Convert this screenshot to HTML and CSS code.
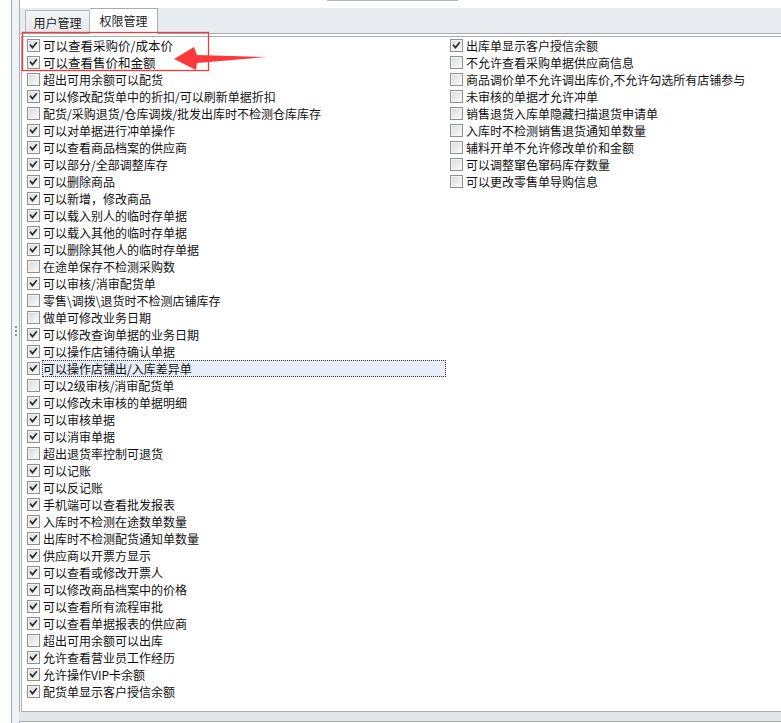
FILE: index.html
```html
<!DOCTYPE html>
<html>
<head>
<meta charset="utf-8">
<link rel="stylesheet" href="styles.css">
</head>
<body>
<div class="page">
  <div class="gutter"></div>
  <div class="splitter"><div class="grip"><i></i><i></i><i></i></div></div>
  <div class="tabctl">
    <div class="topstrip"><div class="topbar"></div></div>
    <div class="tabstrip">
      <div class="tab">用户管理</div>
      <div class="tab active">权限管理</div>
    </div>
    <div class="tabbody">
      <div class="panel">
        <div class="col left">
          <div class="opt big on"><span class="box"><svg viewBox="0 0 13 13"><path d="M3 6.2 L5.3 9 L9.8 3.4"/></svg></span><span class="txt">可以查看采购价/成本价</span></div>
          <div class="opt big on"><span class="box"><svg viewBox="0 0 13 13"><path d="M3 6.2 L5.3 9 L9.8 3.4"/></svg></span><span class="txt">可以查看售价和金额</span></div>
          <div class="opt"><span class="box"></span><span class="txt">超出可用余额可以配货</span></div>
          <div class="opt on"><span class="box"><svg viewBox="0 0 13 13"><path d="M3 6.2 L5.3 9 L9.8 3.4"/></svg></span><span class="txt">可以修改配货单中的折扣/可以刷新单据折扣</span></div>
          <div class="opt"><span class="box"></span><span class="txt">配货/采购退货/仓库调拨/批发出库时不检测仓库库存</span></div>
          <div class="opt on"><span class="box"><svg viewBox="0 0 13 13"><path d="M3 6.2 L5.3 9 L9.8 3.4"/></svg></span><span class="txt">可以对单据进行冲单操作</span></div>
          <div class="opt on"><span class="box"><svg viewBox="0 0 13 13"><path d="M3 6.2 L5.3 9 L9.8 3.4"/></svg></span><span class="txt">可以查看商品档案的供应商</span></div>
          <div class="opt on"><span class="box"><svg viewBox="0 0 13 13"><path d="M3 6.2 L5.3 9 L9.8 3.4"/></svg></span><span class="txt">可以部分/全部调整库存</span></div>
          <div class="opt on"><span class="box"><svg viewBox="0 0 13 13"><path d="M3 6.2 L5.3 9 L9.8 3.4"/></svg></span><span class="txt">可以删除商品</span></div>
          <div class="opt on"><span class="box"><svg viewBox="0 0 13 13"><path d="M3 6.2 L5.3 9 L9.8 3.4"/></svg></span><span class="txt">可以新增，修改商品</span></div>
          <div class="opt on"><span class="box"><svg viewBox="0 0 13 13"><path d="M3 6.2 L5.3 9 L9.8 3.4"/></svg></span><span class="txt">可以载入别人的临时存单据</span></div>
          <div class="opt on"><span class="box"><svg viewBox="0 0 13 13"><path d="M3 6.2 L5.3 9 L9.8 3.4"/></svg></span><span class="txt">可以载入其他的临时存单据</span></div>
          <div class="opt on"><span class="box"><svg viewBox="0 0 13 13"><path d="M3 6.2 L5.3 9 L9.8 3.4"/></svg></span><span class="txt">可以删除其他人的临时存单据</span></div>
          <div class="opt"><span class="box"></span><span class="txt">在途单保存不检测采购数</span></div>
          <div class="opt on"><span class="box"><svg viewBox="0 0 13 13"><path d="M3 6.2 L5.3 9 L9.8 3.4"/></svg></span><span class="txt">可以审核/消审配货单</span></div>
          <div class="opt"><span class="box"></span><span class="txt">零售\调拨\退货时不检测店铺库存</span></div>
          <div class="opt"><span class="box"></span><span class="txt">做单可修改业务日期</span></div>
          <div class="opt on"><span class="box"><svg viewBox="0 0 13 13"><path d="M3 6.2 L5.3 9 L9.8 3.4"/></svg></span><span class="txt">可以修改查询单据的业务日期</span></div>
          <div class="opt on"><span class="box"><svg viewBox="0 0 13 13"><path d="M3 6.2 L5.3 9 L9.8 3.4"/></svg></span><span class="txt">可以操作店铺待确认单据</span></div>
          <div class="opt on focus"><span class="box"><svg viewBox="0 0 13 13"><path d="M3 6.2 L5.3 9 L9.8 3.4"/></svg></span><span class="txt">可以操作店铺出/入库差异单</span></div>
          <div class="opt"><span class="box"></span><span class="txt">可以2级审核/消审配货单</span></div>
          <div class="opt on"><span class="box"><svg viewBox="0 0 13 13"><path d="M3 6.2 L5.3 9 L9.8 3.4"/></svg></span><span class="txt">可以修改未审核的单据明细</span></div>
          <div class="opt on"><span class="box"><svg viewBox="0 0 13 13"><path d="M3 6.2 L5.3 9 L9.8 3.4"/></svg></span><span class="txt">可以审核单据</span></div>
          <div class="opt on"><span class="box"><svg viewBox="0 0 13 13"><path d="M3 6.2 L5.3 9 L9.8 3.4"/></svg></span><span class="txt">可以消审单据</span></div>
          <div class="opt"><span class="box"></span><span class="txt">超出退货率控制可退货</span></div>
          <div class="opt on"><span class="box"><svg viewBox="0 0 13 13"><path d="M3 6.2 L5.3 9 L9.8 3.4"/></svg></span><span class="txt">可以记账</span></div>
          <div class="opt on"><span class="box"><svg viewBox="0 0 13 13"><path d="M3 6.2 L5.3 9 L9.8 3.4"/></svg></span><span class="txt">可以反记账</span></div>
          <div class="opt on"><span class="box"><svg viewBox="0 0 13 13"><path d="M3 6.2 L5.3 9 L9.8 3.4"/></svg></span><span class="txt">手机端可以查看批发报表</span></div>
          <div class="opt on"><span class="box"><svg viewBox="0 0 13 13"><path d="M3 6.2 L5.3 9 L9.8 3.4"/></svg></span><span class="txt">入库时不检测在途数单数量</span></div>
          <div class="opt on"><span class="box"><svg viewBox="0 0 13 13"><path d="M3 6.2 L5.3 9 L9.8 3.4"/></svg></span><span class="txt">出库时不检测配货通知单数量</span></div>
          <div class="opt on"><span class="box"><svg viewBox="0 0 13 13"><path d="M3 6.2 L5.3 9 L9.8 3.4"/></svg></span><span class="txt">供应商以开票方显示</span></div>
          <div class="opt on"><span class="box"><svg viewBox="0 0 13 13"><path d="M3 6.2 L5.3 9 L9.8 3.4"/></svg></span><span class="txt">可以查看或修改开票人</span></div>
          <div class="opt on"><span class="box"><svg viewBox="0 0 13 13"><path d="M3 6.2 L5.3 9 L9.8 3.4"/></svg></span><span class="txt">可以修改商品档案中的价格</span></div>
          <div class="opt on"><span class="box"><svg viewBox="0 0 13 13"><path d="M3 6.2 L5.3 9 L9.8 3.4"/></svg></span><span class="txt">可以查看所有流程审批</span></div>
          <div class="opt on"><span class="box"><svg viewBox="0 0 13 13"><path d="M3 6.2 L5.3 9 L9.8 3.4"/></svg></span><span class="txt">可以查看单据报表的供应商</span></div>
          <div class="opt"><span class="box"></span><span class="txt">超出可用余额可以出库</span></div>
          <div class="opt on"><span class="box"><svg viewBox="0 0 13 13"><path d="M3 6.2 L5.3 9 L9.8 3.4"/></svg></span><span class="txt">允许查看营业员工作经历</span></div>
          <div class="opt on"><span class="box"><svg viewBox="0 0 13 13"><path d="M3 6.2 L5.3 9 L9.8 3.4"/></svg></span><span class="txt">允许操作VIP卡余额</span></div>
          <div class="opt on"><span class="box"><svg viewBox="0 0 13 13"><path d="M3 6.2 L5.3 9 L9.8 3.4"/></svg></span><span class="txt">配货单显示客户授信余额</span></div>
        </div>
        <div class="col right">
          <div class="opt on"><span class="box"><svg viewBox="0 0 13 13"><path d="M3 6.2 L5.3 9 L9.8 3.4"/></svg></span><span class="txt">出库单显示客户授信余额</span></div>
          <div class="opt"><span class="box"></span><span class="txt">不允许查看采购单据供应商信息</span></div>
          <div class="opt"><span class="box"></span><span class="txt">商品调价单不允许调出库价,不允许勾选所有店铺参与</span></div>
          <div class="opt"><span class="box"></span><span class="txt">未审核的单据才允许冲单</span></div>
          <div class="opt"><span class="box"></span><span class="txt">销售退货入库单隐藏扫描退货申请单</span></div>
          <div class="opt"><span class="box"></span><span class="txt">入库时不检测销售退货通知单数量</span></div>
          <div class="opt"><span class="box"></span><span class="txt">辅料开单不允许修改单价和金额</span></div>
          <div class="opt"><span class="box"></span><span class="txt">可以调整窜色窜码库存数量</span></div>
          <div class="opt"><span class="box"></span><span class="txt">可以更改零售单导购信息</span></div>
        </div>
      </div>
      <div class="bottomband"></div>
    </div>
  </div>
  <svg class="annot" width="781" height="723" viewBox="0 0 781 723">
    <rect x="22.5" y="32.5" width="186" height="38" fill="none" stroke="#ee3b3b" stroke-width="1.3"/>
    <polygon points="174,59 194,47 197,55 267,57 197,63 196,70" fill="#fa3a3a"/>
  </svg>
</div>
</body>
</html>
```

FILE: styles.css
```css
* { box-sizing: border-box; }
html, body { margin: 0; padding: 0; background: #fff; }
body {
  font-family: "Noto Sans CJK SC", "Noto Sans", sans-serif;
  font-size: 12px;
  color: #111;
}
.page {
  position: relative;
  width: 781px;
  height: 723px;
  display: flex;
  overflow: hidden;
}
.gutter {
  width: 12px;
  border-right: 1px solid #a6aab1;
  background: #fff;
}
.splitter {
  width: 7px;
  background: #f1f2f4;
  display: flex;
  flex-direction: column;
  justify-content: center;
  align-items: center;
  padding-bottom: 62px;
}
.grip { display: flex; flex-direction: column; gap: 2px; }
.grip i { display: block; width: 2px; height: 2px; background: #8e939a; }
.tabctl {
  flex: 1;
  display: flex;
  flex-direction: column;
  border-left: 1px solid #a6aab1;
}
.topstrip { height: 8px; background: #fff; }
.topbar { margin-left: 307px; width: 131px; height: 1px; background: #b3b7be; }
.tabstrip {
  height: 26px;
  background: #e8ebf0;
  border-bottom: 1px solid #a6aab1;
  display: flex;
  align-items: flex-end;
  padding-left: 5px;
}
.tab {
  height: 23px;
  width: 65px;
  border: 1px solid #b4b8bf;
  border-bottom: none;
  background: linear-gradient(#f4f5f7, #e4e7eb);
  display: flex;
  align-items: center;
  justify-content: center;
  padding-top: 1px;
  color: #1a1a1a;
}
.tab.active {
  height: 26px;
  width: 68px;
  background: #fff;
  border-color: #a6aab1;
  margin-bottom: -1px;
  border-left: none;
  padding-bottom: 4px;
}
.tabbody {
  flex: 1;
  background: #fff;
  padding: 2px 0 0 1px;
  display: flex;
  flex-direction: column;
}
.panel {
  flex: 1;
  border-left: 1px solid #a6aab1;
  border-top: 1px solid #a6aab1;
  border-bottom: 1px solid #a6aab1;
  display: grid;
  grid-template-columns: 425px 1fr;
  align-content: start;
}
.bottomband {
  height: 10px;
  margin-left: -2px;
  background: #e2e5ea;
  border-bottom: 1px solid #a6aab1;
  margin-bottom: 1px;
}
.col { display: flex; flex-direction: column; }
.col.left { padding-left: 5px; }
.col.right { padding-left: 3px; }
.opt {
  height: 17px;
  display: flex;
  align-items: center;
  white-space: nowrap;
}
.box {
  flex: none;
  width: 13px;
  height: 13px;
  border: 1px solid #8e9091;
  background: linear-gradient(135deg, #d8d9da 0%, #ebeced 55%, #fbfbfb 100%);
  box-shadow: inset 0 0 0 1px #f4f4f4;
  display: flex;
}
.box svg { width: 11px; height: 11px; }
.box path {
  fill: none;
  stroke: #2b2b2b;
  stroke-width: 1.9;
  stroke-linecap: square;
  stroke-linejoin: miter;
}
.txt {
  flex: 1;
  margin-left: 2px;
  margin-right: 1px;
  height: 17px;
  line-height: 15px;
  border: 1px dotted transparent;
  display: flex;
  align-items: center;
  overflow: hidden;
}
.opt.big .txt { font-size: 12.5px; line-height: 15px; }
.opt.focus .txt {
  background: #e6edf7;
  border-color: #333;
}
.annot {
  position: absolute;
  left: 0;
  top: 0;
  pointer-events: none;
}
```
